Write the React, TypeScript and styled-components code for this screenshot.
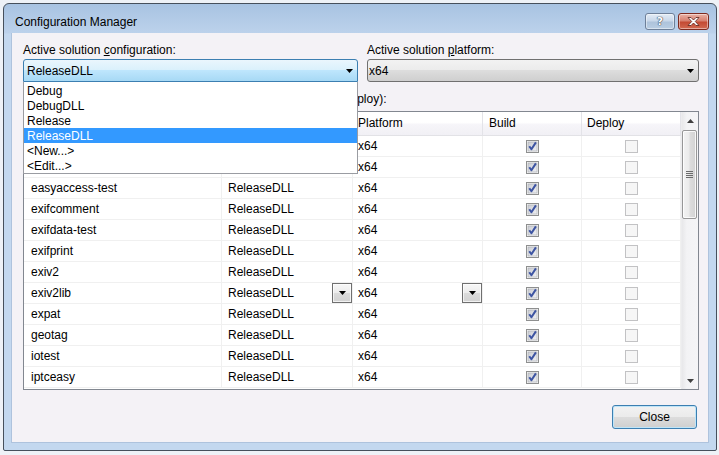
import React from "react";
import styled, { createGlobalStyle } from "styled-components";

const Global = createGlobalStyle`
  html, body { margin: 0; padding: 0; background: #eef2f7; }
  body { font-family: "Liberation Sans", Arial, sans-serif; font-size: 12px; color: #000; }
  * { box-sizing: border-box; }
`;

const Desktop = styled.div`
  width: 719px;
  height: 455px;
  padding: 3px 0 0 3px;
`;

const Window = styled.div`
  width: 714px;
  height: 448px;
  border: 1px solid #46505c;
  border-radius: 6px 6px 2px 2px;
  background: linear-gradient(#a8c3e2 0px, #bcd2eb 29px, #c3d8ef 30px, #c3d8ef 100%);
  display: flex;
  flex-direction: column;
  padding: 0 7px 7px 7px;
`;

const TitleBar = styled.div`
  height: 29px;
  display: flex;
  align-items: flex-start;
`;

const Title = styled.div`
  margin-top: 11px;
  margin-left: 4px;
  line-height: 15px;
  color: #000;
`;

const CaptionButtons = styled.div`
  margin-left: auto;
  margin-top: 9px;
  display: flex;
  gap: 3px;
`;

const CaptionButton = styled.div<{ $variant: "help" | "close" }>`
  width: ${(p) => (p.$variant === "help" ? 30 : 31)}px;
  height: 17px;
  border-radius: 3px;
  border: 1px solid ${(p) => (p.$variant === "help" ? "#6d7f98" : "#7d2a1f")};
  background: ${(p) =>
    p.$variant === "help"
      ? "linear-gradient(#e3ecf6 0%, #c9d8ea 45%, #aec3db 55%, #b9cde3 100%)"
      : "linear-gradient(#eab2a5 0%, #d7806f 45%, #c44a33 55%, #d26a52 100%)"};
  box-shadow: inset 0 0 0 1px rgba(255, 255, 255, 0.45);
  display: flex;
  align-items: center;
  justify-content: center;
`;

const HelpGlyph = styled.span`
  font-family: "DejaVu Sans", sans-serif;
  font-weight: bold;
  font-size: 11px;
  line-height: 11px;
  color: #ffffff;
  text-shadow: 0 0 1px #3a4658, 0 0 1px #3a4658, 0 0 1px #3a4658;
`;

const Client = styled.div`
  width: 698px;
  height: 410px;
  background: #f4f2f6;
  border: 1px solid #aec3dd;
  border-top: none;
  padding: 9px 10px 0 11px;
  display: flex;
  flex-direction: column;
`;

const TopRow = styled.div`
  display: grid;
  grid-template-columns: 335px 332px;
  column-gap: 9px;
`;

const Field = styled.div`
  display: flex;
  flex-direction: column;
  position: relative;
`;

const Label = styled.div`
  line-height: 15px;
  height: 15px;
  white-space: nowrap;
  margin-bottom: 2px;
  padding-top: 1px;
`;

const Combo = styled.div<{ $open?: boolean }>`
  height: 23px;
  border: 1px solid ${(p) => (p.$open ? "#3c7fb1" : "#707070")};
  border-radius: ${(p) => (p.$open ? "3px 3px 0 0" : "3px")};
  background: ${(p) =>
    p.$open
      ? "linear-gradient(#eaf6fd 0%, #d9f0fc 50%, #bee6fd 50%, #a7d9f5 100%)"
      : "linear-gradient(#f2f2f2 0%, #ebebeb 50%, #dddddd 50%, #cfcfcf 100%)"};
  display: flex;
  align-items: center;
  padding-left: ${(p) => (p.$open ? 3 : 1)}px;
  padding-right: 4px;
  line-height: 21px;
`;

const ComboText = styled.span`
  flex: 1;
  padding-top: 1px;
`;

const Arrow = ({ color = "#000" }: { color?: string }) => (
  <svg width="7" height="4" viewBox="0 0 7 4">
    <path d="M0 0 H7 L3.5 4 Z" fill={color} />
  </svg>
);

const DropList = styled.div`
  position: absolute;
  top: 40px;
  left: 0;
  width: 335px;
  background: #ffffff;
  border: 1px solid #9a9ca2;
  border-top: none;
  padding-top: 1px;
  z-index: 5;
`;

const DropItem = styled.div<{ $selected?: boolean }>`
  height: 15px;
  line-height: 13px;
  padding-top: 2px;
  padding-left: 3px;
  background: ${(p) => (p.$selected ? "#3399ff" : "transparent")};
  color: ${(p) => (p.$selected ? "#fff" : "#000")};
`;

const SectionLabel = styled.div`
  margin-top: 10px;
  line-height: 15px;
  height: 15px;
  white-space: nowrap;
  margin-bottom: 4px;
`;

const Table = styled.div`
  width: 676px;
  height: 279px;
  border: 1px solid #828790;
  background: #ffffff;
  display: flex;
`;

const DataArea = styled.div`
  width: 657px;
  display: flex;
  flex-direction: column;
`;

const COLS = "198px 131px 130px 99px 99px";

const HeaderRow = styled.div`
  display: grid;
  grid-template-columns: ${COLS};
  height: 24px;
  border-bottom: 1px solid #e2e2e6;
  background: linear-gradient(#ffffff 0%, #ffffff 45%, #f6f5f9 55%, #f1f0f5 100%);
`;

const HeaderCell = styled.div<{ $pad: number }>`
  border-right: 1px solid #e3e3e8;
  padding-left: ${(p) => p.$pad}px;
  line-height: 23px;
  white-space: nowrap;
`;

const Row = styled.div`
  display: grid;
  grid-template-columns: ${COLS};
  height: 21px;
`;

const Cell = styled.div<{ $pad?: number; $center?: boolean }>`
  height: 21px;
  border-right: 1px solid #f0f0f0;
  border-bottom: 1px solid #f0f0f0;
  padding-left: ${(p) => p.$pad ?? 0}px;
  display: flex;
  align-items: center;
  justify-content: ${(p) => (p.$center ? "center" : "flex-start")};
  white-space: nowrap;
  overflow: hidden;
  line-height: 20px;
`;

const CellText = styled.span`
  flex: 1;
`;

const CellDrop = styled.div`
  width: 20px;
  height: 20px;
  border: 1px solid #6f6f6f;
  background: linear-gradient(#f7f7f7 0%, #ececec 50%, #dcdcdc 50%, #d2d2d2 100%);
  box-shadow: inset 0 0 0 1px rgba(255, 255, 255, 0.7);
  display: flex;
  align-items: center;
  justify-content: center;
  flex: none;
`;

const Scrollbar = styled.div`
  width: 17px;
  display: flex;
  flex-direction: column;
  background: linear-gradient(to right, #e8e8ea 0%, #f3f3f5 30%, #f5f5f7 100%);
  border-left: 1px solid #ececee;
`;

const ScrollArrow = styled.div`
  height: 17px;
  display: flex;
  align-items: center;
  justify-content: center;
  flex: none;
`;

const ScrollTrack = styled.div`
  flex: 1;
  display: flex;
  flex-direction: column;
  padding-top: 1px;
`;

const Thumb = styled.div`
  height: 89px;
  width: 15px;
  border: 1px solid #979797;
  border-radius: 2px;
  background: linear-gradient(to right, #f3f3f3 0%, #ebebeb 45%, #dcdcdc 55%, #d3d3d3 100%);
  box-shadow: inset 0 0 0 1px rgba(255, 255, 255, 0.8);
  display: flex;
  align-items: center;
  justify-content: center;
`;

const Footer = styled.div`
  display: flex;
  justify-content: flex-end;
  margin-top: 15px;
  padding-right: 1px;
`;

const Button = styled.div`
  width: 85px;
  height: 24px;
  border: 1px solid #3c7fb1;
  border-radius: 3px;
  background: linear-gradient(#f2f2f2 0%, #ebebeb 50%, #dddddd 50%, #cfcfcf 100%);
  box-shadow: inset 0 0 0 1px #bfe5f8;
  display: flex;
  align-items: center;
  justify-content: center;
  line-height: 22px;
`;

const CheckBox = ({ checked }: { checked: boolean }) =>
  checked ? (
    <svg width="13" height="13" viewBox="0 0 13 13">
      <defs>
        <linearGradient id="cbg" x1="0" y1="0" x2="1" y2="1">
          <stop offset="0" stopColor="#cbcdd3" />
          <stop offset="1" stopColor="#f0f1f4" />
        </linearGradient>
      </defs>
      <rect x="0.5" y="0.5" width="12" height="12" fill="#f4f4f4" stroke="#8e8f8f" />
      <rect x="2" y="2" width="9" height="9" fill="url(#cbg)" stroke="#a9abb1" strokeWidth="0.6" />
      <path d="M3.3 6.2 L5.4 9.3 L9.9 2.4" fill="none" stroke="#3d54a2" strokeWidth="2" strokeLinejoin="round" />
    </svg>
  ) : (
    <svg width="13" height="13" viewBox="0 0 13 13">
      <rect x="0.5" y="0.5" width="12" height="12" fill="#f6f6f6" stroke="#c2c2c4" />
    </svg>
  );

const CloseGlyph = () => (
  <svg width="13" height="9" viewBox="0 0 13 9">
    <path
      d="M1 0.5 H4 L6.5 3 L9 0.5 H12 L8.3 4.5 L12 8.5 H9 L6.5 6 L4 8.5 H1 L4.7 4.5 Z"
      fill="#ffffff"
      stroke="#5b1f16"
      strokeWidth="0.8"
      strokeLinejoin="round"
    />
  </svg>
);

const Grip = () => (
  <svg width="7" height="7" viewBox="0 0 7 7">
    <rect x="0" y="0" width="7" height="1" fill="#6b6b6b" />
    <rect x="0" y="2" width="7" height="1" fill="#6b6b6b" />
    <rect x="0" y="4" width="7" height="1" fill="#6b6b6b" />
    <rect x="0" y="6" width="7" height="1" fill="#6b6b6b" />
  </svg>
);

const UpArrow = () => (
  <svg width="7" height="4" viewBox="0 0 7 4">
    <path d="M0 4 H7 L3.5 0 Z" fill="#404040" />
  </svg>
);

const projects = [
  "addmoddel",
  "conntest",
  "easyaccess-test",
  "exifcomment",
  "exifdata-test",
  "exifprint",
  "exiv2",
  "exiv2lib",
  "expat",
  "geotag",
  "iotest",
  "iptceasy",
];

const configs = ["Debug", "DebugDLL", "Release", "ReleaseDLL", "<New...>", "<Edit...>"];

export default function App() {
  return (
    <>
      <Global />
      <Desktop>
        <Window>
          <TitleBar>
            <Title>Configuration Manager</Title>
            <CaptionButtons>
              <CaptionButton $variant="help">
                <HelpGlyph>?</HelpGlyph>
              </CaptionButton>
              <CaptionButton $variant="close">
                <CloseGlyph />
              </CaptionButton>
            </CaptionButtons>
          </TitleBar>
          <Client>
            <TopRow>
              <Field>
                <Label>
                  Active solution <u>c</u>onfiguration:
                </Label>
                <Combo $open>
                  <ComboText>ReleaseDLL</ComboText>
                  <Arrow />
                </Combo>
                <DropList>
                  {configs.map((c) => (
                    <DropItem key={c} $selected={c === "ReleaseDLL"}>
                      {c}
                    </DropItem>
                  ))}
                </DropList>
              </Field>
              <Field>
                <Label>
                  Active solution <u>p</u>latform:
                </Label>
                <Combo>
                  <ComboText>x64</ComboText>
                  <Arrow />
                </Combo>
              </Field>
            </TopRow>
            <SectionLabel>
              Project contexts (check the project configurations to build or deploy):
            </SectionLabel>
            <Table>
              <DataArea>
                <HeaderRow>
                  <HeaderCell $pad={6}>Project</HeaderCell>
                  <HeaderCell $pad={6}>Configuration</HeaderCell>
                  <HeaderCell $pad={5}>Platform</HeaderCell>
                  <HeaderCell $pad={6}>Build</HeaderCell>
                  <HeaderCell $pad={5}>Deploy</HeaderCell>
                </HeaderRow>
                {projects.map((p) => (
                  <Row key={p}>
                    <Cell $pad={7}>{p}</Cell>
                    <Cell $pad={6}>
                      <CellText>ReleaseDLL</CellText>
                      {p === "exiv2lib" && (
                        <CellDrop>
                          <Arrow />
                        </CellDrop>
                      )}
                    </Cell>
                    <Cell $pad={5}>
                      <CellText>x64</CellText>
                      {p === "exiv2lib" && (
                        <CellDrop>
                          <Arrow />
                        </CellDrop>
                      )}
                    </Cell>
                    <Cell $center>
                      <CheckBox checked />
                    </Cell>
                    <Cell $center>
                      <CheckBox checked={false} />
                    </Cell>
                  </Row>
                ))}
              </DataArea>
              <Scrollbar>
                <ScrollArrow>
                  <UpArrow />
                </ScrollArrow>
                <ScrollTrack>
                  <Thumb>
                    <Grip />
                  </Thumb>
                </ScrollTrack>
                <ScrollArrow>
                  <Arrow color="#404040" />
                </ScrollArrow>
              </Scrollbar>
            </Table>
            <Footer>
              <Button>Close</Button>
            </Footer>
          </Client>
        </Window>
      </Desktop>
    </>
  );
}
